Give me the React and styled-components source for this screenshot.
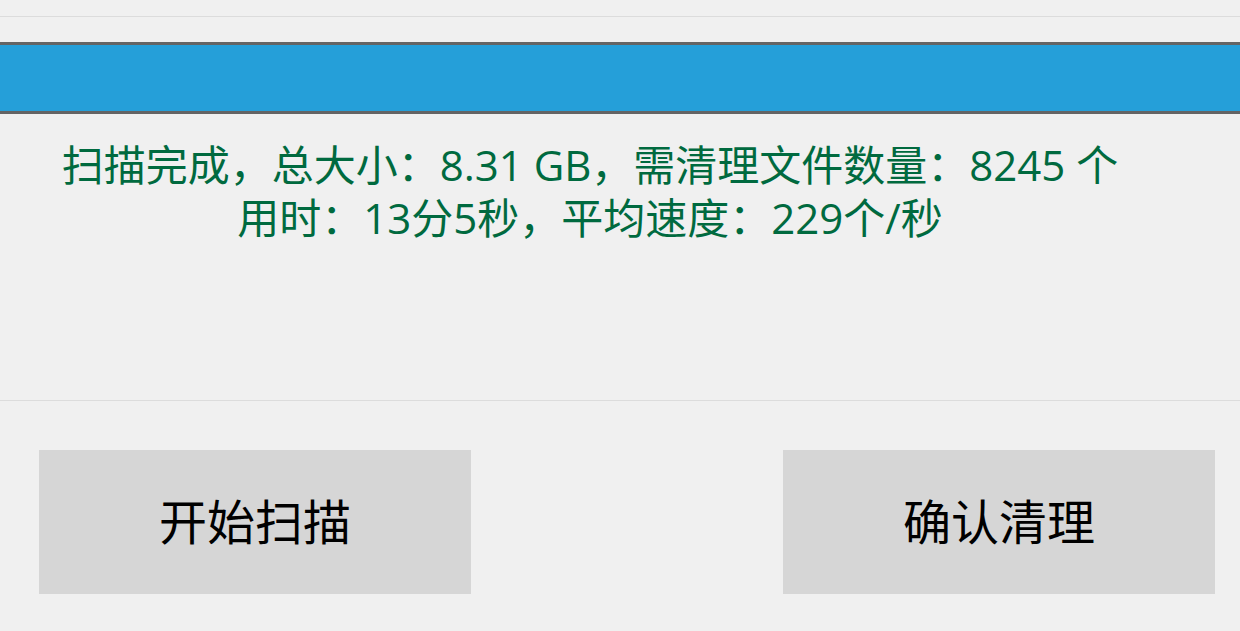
import styled, { createGlobalStyle } from "styled-components";

const GlobalStyle = createGlobalStyle`
  html, body {
    margin: 0;
    padding: 0;
    background: #f0f0f0;
  }
  body {
    font-family: "Open Sans", "Noto Sans CJK SC", sans-serif;
  }
`;

export default function App() {
  return (
    <Window>
      <GlobalStyle />
      <TopStrip />
      <ProgressBar />
      <StatusArea>
        <StatusText>
          扫描完成，总大小：8.31 GB，需清理文件数量：8245 个
          <br />
          用时：13分5秒，平均速度：229个/秒
        </StatusText>
      </StatusArea>
      <ButtonRow>
        <ActionButton>开始扫描</ActionButton>
        <ActionButton>确认清理</ActionButton>
      </ButtonRow>
    </Window>
  );
}

const Window = styled.div`
  width: 1240px;
  height: 631px;
  display: flex;
  flex-direction: column;
  overflow: hidden;
`;

const TopStrip = styled.div`
  height: 16px;
  border-bottom: 1px solid #dcdcdc;
  flex-shrink: 0;
`;

const ProgressBar = styled.div`
  margin-top: 25px;
  height: 66px;
  background: #259fd9;
  border-top: 3px solid #646464;
  border-bottom: 3px solid #646464;
  flex-shrink: 0;
`;

const StatusArea = styled.div`
  height: 287px;
  border-bottom: 1px solid #dcdcdc;
  flex-shrink: 0;
  box-sizing: border-box;
  padding: 24px 60px 0 0;
`;

const StatusText = styled.p`
  margin: 0;
  text-align: center;
  color: #006a3f;
  font-size: 42px;
  line-height: 53px;
  font-family: "Open Sans", "Noto Sans CJK SC", sans-serif;
`;

const ButtonRow = styled.div`
  display: flex;
  justify-content: space-between;
  padding: 49px 25px 0 39px;
`;

const ActionButton = styled.button`
  width: 432px;
  height: 144px;
  background: #d6d6d6;
  border: none;
  border-radius: 0;
  padding: 0 0 6px;
  color: #000;
  font-size: 48px;
  font-family: "Noto Sans CJK SC", sans-serif;
  cursor: pointer;
`;
